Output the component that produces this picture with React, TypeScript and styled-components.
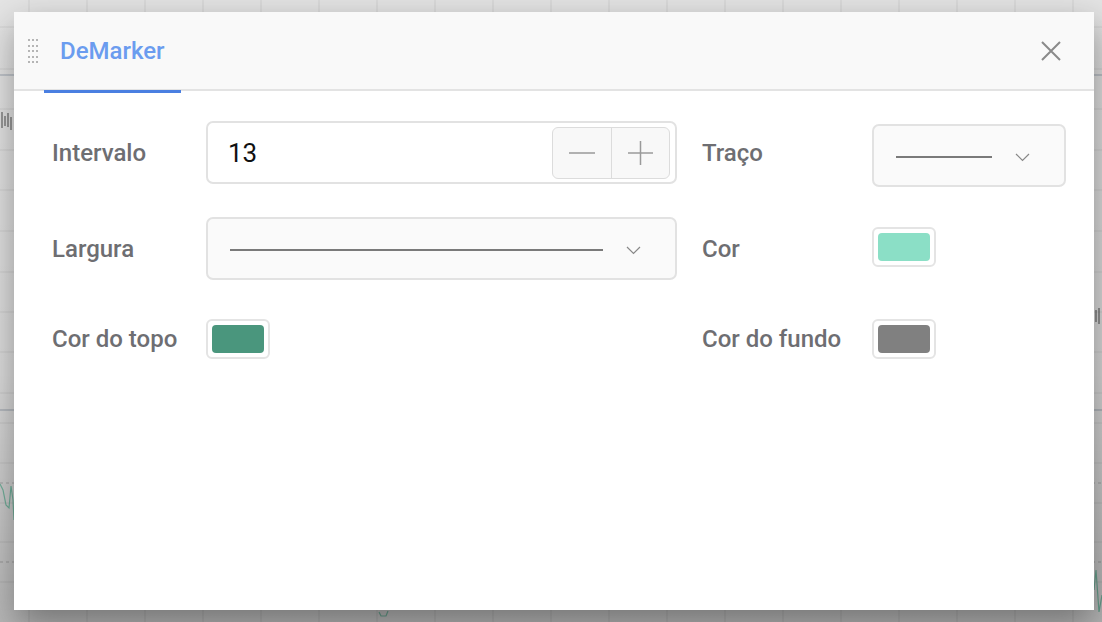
import React from "react";
import styled, { createGlobalStyle } from "styled-components";

const GlobalStyle = createGlobalStyle`
  html, body {
    margin: 0;
    padding: 0;
    overflow: hidden;
  }
  body {
    font-family: Roboto, "Liberation Sans", Arial, sans-serif;
    background: #e5e5e5;
  }
`;

const Screen = styled.div`
  position: relative;
  width: 1102px;
  height: 622px;
  overflow: hidden;
  background: #e4e4e4;
`;

const Backdrop = styled.svg`
  position: absolute;
  inset: 0;
`;

const Dialog = styled.div`
  position: absolute;
  left: 14px;
  top: 12px;
  width: 1080px;
  height: 598px;
  background: #fff;
  box-shadow: 2px 14px 34px rgba(0, 0, 0, 0.38);
  display: flex;
  flex-direction: column;
`;

const Header = styled.div`
  flex: none;
  height: 77px;
  background: #f9f9f9;
  border-bottom: 2px solid #e3e3e3;
  display: flex;
  align-items: flex-start;
  padding-left: 14px;
  padding-right: 32px;
`;

const Grip = styled.div`
  align-self: center;
  display: grid;
  grid-template-columns: repeat(3, 2px);
  grid-auto-rows: 2px;
  column-gap: 2px;
  row-gap: 3.5px;
  margin-top: 1px;
  margin-right: 6px;

  span {
    background: #b5b5b5;
  }
`;

const Tab = styled.div<{ active?: boolean }>`
  box-sizing: border-box;
  height: 81px;
  margin-bottom: -4px;
  padding: 0 16px;
  display: flex;
  align-items: center;
  font-size: 24px;
  font-weight: 500;
  color: ${({ active }) => (active ? "#6b9cef" : "#777")};
  border-bottom: 3px solid ${({ active }) => (active ? "#4a7fe1" : "transparent")};
`;

const CloseButton = styled.button`
  margin-left: auto;
  align-self: center;
  width: 22px;
  height: 22px;
  padding: 0;
  border: none;
  background: none;
  display: flex;
  align-items: center;
  justify-content: center;
  cursor: pointer;
`;

const Body = styled.div`
  padding: 30px 29px 0 38px;
  display: grid;
  grid-template-columns: 625px 1fr;
  grid-template-rows: 63px 63px 52px;
  column-gap: 25px;
  row-gap: 33px;
`;

const Field = styled.div`
  display: flex;
  align-items: center;
`;

const Label = styled.div<{ width: number }>`
  flex: none;
  width: ${({ width }) => width}px;
  font-size: 24px;
  font-weight: 500;
  color: #6e6e72;
`;

const NumberBox = styled.div`
  box-sizing: border-box;
  width: 471px;
  height: 63px;
  border: 2px solid #e2e2e2;
  border-radius: 7px;
  display: flex;
  align-items: center;
  padding: 0 5px 0 20px;
`;

const Value = styled.span`
  font-size: 26px;
  color: #111;
`;

const Stepper = styled.div`
  margin-left: auto;
  height: 50px;
  display: flex;
  background: #f8f8f8;
  border: 1.5px solid #dcdcdc;
  border-radius: 6px;
  overflow: hidden;
`;

const StepButton = styled.button`
  width: 58px;
  height: 100%;
  padding: 0;
  border: none;
  background: none;
  display: flex;
  align-items: center;
  justify-content: center;

  & + & {
    border-left: 1.5px solid #dcdcdc;
  }
`;

const Select = styled.div<{ width: number; offset?: number }>`
  box-sizing: border-box;
  width: ${({ width }) => width}px;
  height: 63px;
  align-self: ${({ offset }) => (offset ? "flex-start" : "auto")};
  margin-top: ${({ offset }) => offset ?? 0}px;
  background: #fafafa;
  border: 2px solid #e2e2e2;
  border-radius: 7px;
  display: flex;
  align-items: center;
  gap: 23px;
  padding: 0 34px 0 22px;
`;

const StrokeLine = styled.div`
  flex: 1;
  height: 2px;
  margin-top: 2px;
  background: #7a7a7a;
`;

const Swatch = styled.div<{ lift?: number }>`
  box-sizing: border-box;
  width: 64px;
  height: 40px;
  margin-top: ${({ lift }) => (lift ? -lift : 0)}px;
  padding: 4px;
  border: 2px solid #e4e4e4;
  border-radius: 6px;
  background: #fff;
`;

const SwatchColor = styled.div<{ color: string }>`
  width: 100%;
  height: 100%;
  border-radius: 4px;
  background: ${({ color }) => color};
`;

const Chevron = () => (
  <svg width="15" height="9" viewBox="0 0 15 9" style={{ flex: "none", marginTop: 3 }}>
    <path d="M1 1l6.5 6.5L14 1" fill="none" stroke="#888" strokeWidth="1.2" />
  </svg>
);

const ChartBackground = () => {
  const verticals = Array.from({ length: 19 }, (_, i) => 29 + i * 58);
  const horizontals = [27, 69, 109, 150, 190, 231, 272, 312, 352, 393, 423, 463, 503, 542, 582];
  return (
    <Backdrop width="1102" height="622" viewBox="0 0 1102 622">
      <defs>
        <linearGradient id="dim" x1="0" y1="0" x2="0" y2="1">
          <stop offset="0" stopColor="#000" stopOpacity="0" />
          <stop offset="0.6" stopColor="#000" stopOpacity="0.04" />
          <stop offset="1" stopColor="#000" stopOpacity="0.2" />
        </linearGradient>
      </defs>
      {verticals.map((x) => (
        <line key={`v${x}`} x1={x} y1={0} x2={x} y2={622} stroke="#d0d0d0" strokeWidth="1" />
      ))}
      {horizontals.map((y) => (
        <line key={`h${y}`} x1={0} y1={y} x2={1102} y2={y} stroke="#d2d2d2" strokeWidth="1" />
      ))}
      <line x1={0} y1={75} x2={1102} y2={75} stroke="#9ea7b3" strokeWidth="1" />
      <line x1={0} y1={410} x2={1102} y2={410} stroke="#9ea7b3" strokeWidth="1" />
      <line x1={0} y1={483} x2={1102} y2={483} stroke="#b4b4b4" strokeWidth="1" strokeDasharray="3 3" />
      <line x1={0} y1={562} x2={1102} y2={562} stroke="#b4b4b4" strokeWidth="1" strokeDasharray="3 3" />
      <g stroke="#4d4d4d" strokeWidth="1">
        <line x1={2} y1={112} x2={2} y2={128} />
        <line x1={5} y1={116} x2={5} y2={126} />
        <line x1={8} y1={113} x2={8} y2={127} />
        <line x1={11} y1={117} x2={11} y2={130} />
        <line x1={1096} y1={310} x2={1096} y2={322} />
        <line x1={1099} y1={308} x2={1099} y2={324} />
      </g>
      <polyline
        points="0,484 3,490 6,505 9,508 11,486 13,500 14,520"
        fill="none"
        stroke="#7fc4ad"
        strokeWidth="1.2"
      />
      <polyline points="1094,590 1096,570 1099,612 1102,595" fill="none" stroke="#7fc4ad" strokeWidth="1.2" />
      <polyline points="379,612 381,616 386,616 388,611" fill="none" stroke="#7fc4ad" strokeWidth="1.2" />
      <rect x="0" y="0" width="1102" height="622" fill="url(#dim)" />
    </Backdrop>
  );
};

export default function App() {
  return (
    <>
      <GlobalStyle />
      <Screen>
        <ChartBackground />
        <Dialog>
          <Header>
            <Grip>
              {Array.from({ length: 15 }, (_, i) => (
                <span key={i} />
              ))}
            </Grip>
            <Tab active>DeMarker</Tab>
            <CloseButton aria-label="Fechar">
              <svg width="20" height="20" viewBox="0 0 20 20">
                <path d="M1 1l18 18M19 1L1 19" stroke="#8a8a8a" strokeWidth="2" fill="none" />
              </svg>
            </CloseButton>
          </Header>
          <Body>
            <Field>
              <Label width={154}>Intervalo</Label>
              <NumberBox>
                <Value>13</Value>
                <Stepper>
                  <StepButton aria-label="Diminuir">
                    <svg width="26" height="2" viewBox="0 0 26 2">
                      <path d="M0 1h26" stroke="#9a9a9a" strokeWidth="1.5" />
                    </svg>
                  </StepButton>
                  <StepButton aria-label="Aumentar">
                    <svg width="25" height="24" viewBox="0 0 25 24">
                      <path d="M0 12h25M12.5 0v24" stroke="#9a9a9a" strokeWidth="1.5" fill="none" />
                    </svg>
                  </StepButton>
                </Stepper>
              </NumberBox>
            </Field>
            <Field>
              <Label width={170}>Traço</Label>
              <Select width={194} offset={3}>
                <StrokeLine />
                <Chevron />
              </Select>
            </Field>
            <Field>
              <Label width={154}>Largura</Label>
              <Select width={471}>
                <StrokeLine />
                <Chevron />
              </Select>
            </Field>
            <Field>
              <Label width={170}>Cor</Label>
              <Swatch lift={4}>
                <SwatchColor color="#8bdfc6" />
              </Swatch>
            </Field>
            <Field>
              <Label width={154}>Cor do topo</Label>
              <Swatch>
                <SwatchColor color="#4a967d" />
              </Swatch>
            </Field>
            <Field>
              <Label width={170}>Cor do fundo</Label>
              <Swatch>
                <SwatchColor color="#808080" />
              </Swatch>
            </Field>
          </Body>
        </Dialog>
      </Screen>
    </>
  );
}
